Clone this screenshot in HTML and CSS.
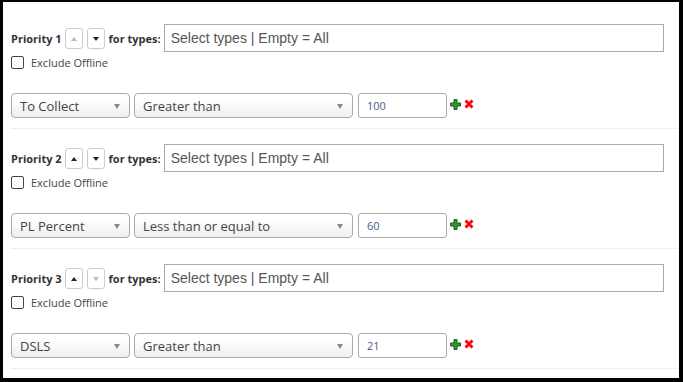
FILE: index.html
```html
<!DOCTYPE html>
<html lang="en">
<head>
  <meta charset="UTF-8">
  <meta name="viewport" content="width=device-width, initial-scale=1.0">
  <title>Priorities</title>
  <link rel="stylesheet" href="styles.css">
</head>
<body>
  <div class="panel">
    <div class="priority">
      <div class="prio-row">
        <span class="prio-label">Priority 1</span>
        <button class="move" disabled><span class="tri up"></span></button>
        <button class="move"><span class="tri down"></span></button>
        <span class="for-label">for types:</span>
        <input type="text" class="types" placeholder="Select types | Empty = All">
      </div>
      <label class="exclude"><input type="checkbox"> Exclude Offline</label>
      <div class="rule-row">
        <div class="select field">To Collect</div>
        <div class="select op">Greater than</div>
        <input type="text" class="value" value="100">
        <svg class="add" width="11" height="11" viewBox="0 0 11 11"><path d="M4 0.5h3v3.5h3.5v3h-3.5v3.5h-3v-3.5h-3.5v-3h3.5z" fill="#2f9a2f" stroke="#1b5e1b" stroke-width="1"/></svg>
        <svg class="remove" width="10" height="10" viewBox="0 0 10 10"><path d="M1.5 1.5l7 7M8.5 1.5l-7 7" stroke="#f00" stroke-width="2.8"/></svg>
      </div>
    </div>

    <div class="priority">
      <div class="prio-row">
        <span class="prio-label">Priority 2</span>
        <button class="move"><span class="tri up"></span></button>
        <button class="move"><span class="tri down"></span></button>
        <span class="for-label">for types:</span>
        <input type="text" class="types" placeholder="Select types | Empty = All">
      </div>
      <label class="exclude"><input type="checkbox"> Exclude Offline</label>
      <div class="rule-row">
        <div class="select field">PL Percent</div>
        <div class="select op">Less than or equal to</div>
        <input type="text" class="value" value="60">
        <svg class="add" width="11" height="11" viewBox="0 0 11 11"><path d="M4 0.5h3v3.5h3.5v3h-3.5v3.5h-3v-3.5h-3.5v-3h3.5z" fill="#2f9a2f" stroke="#1b5e1b" stroke-width="1"/></svg>
        <svg class="remove" width="10" height="10" viewBox="0 0 10 10"><path d="M1.5 1.5l7 7M8.5 1.5l-7 7" stroke="#f00" stroke-width="2.8"/></svg>
      </div>
    </div>

    <div class="priority">
      <div class="prio-row">
        <span class="prio-label">Priority 3</span>
        <button class="move"><span class="tri up"></span></button>
        <button class="move" disabled><span class="tri down"></span></button>
        <span class="for-label">for types:</span>
        <input type="text" class="types" placeholder="Select types | Empty = All">
      </div>
      <label class="exclude"><input type="checkbox"> Exclude Offline</label>
      <div class="rule-row">
        <div class="select field">DSLS</div>
        <div class="select op">Greater than</div>
        <input type="text" class="value" value="21">
        <svg class="add" width="11" height="11" viewBox="0 0 11 11"><path d="M4 0.5h3v3.5h3.5v3h-3.5v3.5h-3v-3.5h-3.5v-3h3.5z" fill="#2f9a2f" stroke="#1b5e1b" stroke-width="1"/></svg>
        <svg class="remove" width="10" height="10" viewBox="0 0 10 10"><path d="M1.5 1.5l7 7M8.5 1.5l-7 7" stroke="#f00" stroke-width="2.8"/></svg>
      </div>
    </div>
  </div>
</body>
</html>
```

FILE: styles.css
```css
html, body {
  margin: 0;
  height: 100%;
  background-color: #000;
  overflow: hidden;
}
body {
  font-family: "Open Sans", "DejaVu Sans", sans-serif;
  font-size: 11px;
  color: #333;
}
.panel {
  margin: 2px 4px 0 3px;
  height: 376px;
  background-color: #fff;
  padding-top: 7px;
  box-sizing: border-box;
  overflow: hidden;
}
.priority {
  margin-left: 8px;
  padding-top: 15px;
  padding-bottom: 10px;
  border-bottom: 1px solid #eee;
}
.prio-row {
  display: flex;
  align-items: center;
  height: 28px;
}
.prio-label, .for-label {
  font-weight: bold;
  color: #333;
}
.prio-label {
  margin-right: 3px;
}
.move {
  width: 18px;
  height: 21px;
  padding: 0;
  margin: 1px 4px 0 0;
  border: 1px solid #ccc;
  border-radius: 3px;
  background-color: #fff;
  display: flex;
  align-items: center;
  justify-content: center;
}
.tri {
  width: 0;
  height: 0;
  border-left: 3.5px solid transparent;
  border-right: 3.5px solid transparent;
}
.tri.up {
  border-bottom: 4px solid #222;
}
.tri.down {
  border-top: 4px solid #222;
}
.move:disabled .tri.up {
  border-bottom-color: #bbb;
}
.move:disabled .tri.down {
  border-top-color: #bbb;
}
.for-label {
  margin-right: 3px;
}
.types {
  width: 500px;
  height: 28px;
  box-sizing: border-box;
  border: 1px solid #aaa;
  padding: 0 6px;
  font-family: "Liberation Sans", Arial, sans-serif;
  font-size: 14px;
  color: #333;
}
.types::placeholder {
  color: #555;
}
.exclude {
  display: flex;
  align-items: center;
  height: 13px;
  margin-top: 4px;
  color: #444;
}
.exclude input {
  appearance: none;
  width: 13px;
  height: 13px;
  margin: 0 7px 0 0;
  border: 1px solid #444;
  border-radius: 2px;
  background-color: #fff;
}
.rule-row {
  display: flex;
  align-items: center;
  margin-top: 24px;
  height: 25px;
}
.select {
  position: relative;
  height: 25px;
  box-sizing: border-box;
  border: 1px solid #aaa;
  border-radius: 4px;
  background: linear-gradient(#fff 20%, #eee);
  padding-left: 8px;
  font-size: 13px;
  line-height: 24px;
  color: #444;
  margin-right: 4px;
}
.select::after {
  content: "";
  position: absolute;
  right: 9px;
  top: 10px;
  border-left: 3px solid transparent;
  border-right: 3px solid transparent;
  border-top: 5px solid #888;
}
.select.field {
  width: 119px;
}
.select.op {
  width: 219px;
}
.value {
  width: 89px;
  height: 25px;
  box-sizing: border-box;
  margin-left: 1px;
  border: 1px solid #aaa;
  border-radius: 3px;
  padding: 0 8px;
  font-family: "Open Sans", sans-serif;
  font-size: 11px;
  color: #4a5a8c;
}
.add {
  margin-left: 3px;
  margin-bottom: 3px;
}
.remove {
  margin-left: 3px;
  margin-bottom: 3px;
}
```
